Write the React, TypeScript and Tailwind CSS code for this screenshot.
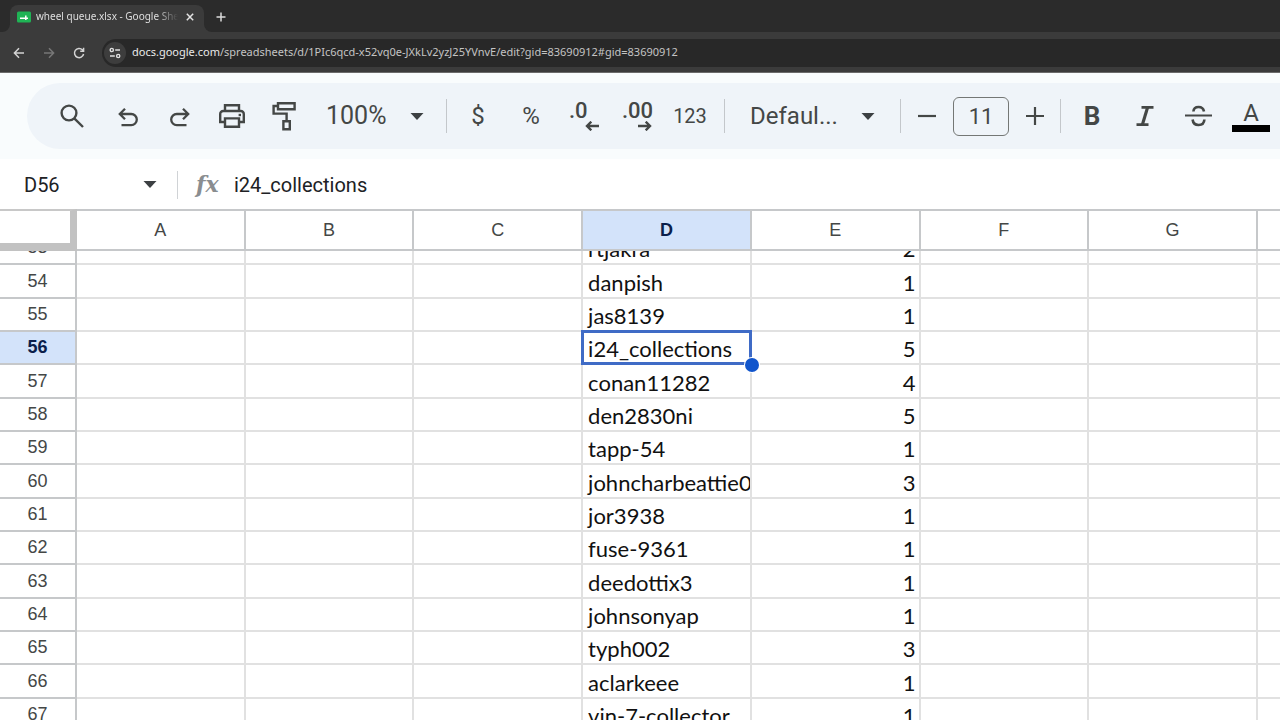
import type { ReactNode } from "react"

const columns = ["A", "B", "C", "D", "E", "F", "G", ""]

const rows = [
  { id: 53, name: "rtjakra", count: 2 },
  { id: 54, name: "danpish", count: 1 },
  { id: 55, name: "jas8139", count: 1 },
  { id: 56, name: "i24_collections", count: 5 },
  { id: 57, name: "conan11282", count: 4 },
  { id: 58, name: "den2830ni", count: 5 },
  { id: 59, name: "tapp-54", count: 1 },
  { id: 60, name: "johncharbeattie0", count: 3 },
  { id: 61, name: "jor3938", count: 1 },
  { id: 62, name: "fuse-9361", count: 1 },
  { id: 63, name: "deedottix3", count: 1 },
  { id: 64, name: "johnsonyap", count: 1 },
  { id: 65, name: "typh002", count: 3 },
  { id: 66, name: "aclarkeee", count: 1 },
  { id: 67, name: "vin-7-collector", count: 1 },
]

const activeRow = 56
const activeColumn = "D"

function ToolButton({ label, children }: { label: string; children: ReactNode }) {
  return (
    <button type="button" aria-label={label} className="flex h-12 w-[52px] shrink-0 items-center justify-center">
      {children}
    </button>
  )
}

function Divider() {
  return <div className="h-[34px] w-px shrink-0 bg-[#c3c7cb]" />
}

function Caret() {
  return (
    <svg viewBox="0 0 14 7" className="pointer-events-none h-[7px] w-[14px] shrink-0 fill-[#3c4043]">
      <path d="M0.500 0h13L7 7z" />
    </svg>
  )
}

function BrowserChrome() {
  return (
    <header className="shrink-0 border-b border-[#6b6b6b] bg-[#3b3b3b] font-['Noto_Sans',sans-serif] text-[#dedede]">
      <div className="flex h-8 items-end bg-[#2b2b2b] pl-[2px]">
        <svg viewBox="0 0 8 8" className="h-2 w-2 fill-[#3b3b3b]">
          <path d="M8 0v8H0a8 8 0 0 0 8-8z" />
        </svg>
        <div className="flex h-[27px] w-[194px] items-center rounded-t-lg bg-[#3b3b3b] pr-[6px] pb-1 pl-[7px]">
          <svg viewBox="0 0 14 12" className="mr-[5px] h-3 w-[14px] shrink-0">
            <rect width="14" height="11" y="0.5" rx="1.5" fill="#1fb455" />
            <path d="M3 7.2h8M8.800 4.500v4.500" stroke="#fff" strokeWidth="1.5" fill="none" />
          </svg>
          <span className="min-w-0 flex-1 overflow-hidden text-[10px] whitespace-nowrap [mask-image:linear-gradient(to_right,#000_85%,transparent)]">
            wheel queue.xlsx - Google Shee
          </span>
          <button type="button" aria-label="Close tab" className="ml-1 p-1">
            <svg viewBox="0 0 8 8" className="h-2 w-2 stroke-[#e3e3e3]" strokeWidth="1.5">
              <path d="M0.8 0.8l6.4 6.4M7.2 0.8L0.8 7.2" />
            </svg>
          </button>
        </div>
        <svg viewBox="0 0 8 8" className="h-2 w-2 fill-[#3b3b3b]">
          <path d="M0 0v8h8a8 8 0 0 1-8-8z" />
        </svg>
        <button type="button" aria-label="New tab" className="mb-[6px] p-1">
          <svg viewBox="0 0 10 10" className="h-[10px] w-[10px] stroke-[#dcdcdc]" strokeWidth="1.5">
            <path d="M5 0.5v9M0.5 5h9" />
          </svg>
        </button>
      </div>
      <div className="flex h-10 items-center pt-px pl-3">
        <button type="button" aria-label="Back" className="mr-4 flex h-[14px] w-[14px] items-center justify-center">
          <svg viewBox="0 0 12 12" className="h-3 w-3 stroke-[#d4d4d4]" strokeWidth="1.5" fill="none">
            <path d="M11 6H1.8M6 1.2L1.4 6 6 10.8" />
          </svg>
        </button>
        <button type="button" aria-label="Forward" className="mr-4 flex h-[14px] w-[14px] items-center justify-center">
          <svg viewBox="0 0 12 12" className="h-3 w-3 stroke-[#777]" strokeWidth="1.5" fill="none">
            <path d="M1 6h9.2M6 1.2L10.6 6 6 10.8" />
          </svg>
        </button>
        <button type="button" aria-label="Reload" className="mr-4 flex h-[14px] w-[14px] items-center justify-center">
          <svg viewBox="0 0 12 12" className="h-3 w-3 stroke-[#d4d4d4]" strokeWidth="1.5" fill="none">
            <path d="M10.6 7A4.6 4.6 0 1 1 9.4 2.8L10.6 4M10.6 0.8V4.2H7.2" />
          </svg>
        </button>
        <div className="flex h-7 flex-1 items-center rounded-l-full bg-[#282828] pl-[2px]">
          <span className="flex h-[22px] w-[22px] items-center justify-center rounded-full bg-[#3d3d3d]">
            <svg viewBox="0 0 12 12" className="h-3 w-3 stroke-[#e0e0e0]" strokeWidth="1.4" fill="none">
              <circle cx="2.8" cy="3" r="1.6" />
              <path d="M6.2 3H11M1 9h4.8" />
              <circle cx="9.2" cy="9" r="1.6" />
            </svg>
          </span>
          <a href="#sheet" className="ml-[6px] text-[11px] whitespace-nowrap text-[#c4c4c4]">
            <span className="text-[#eaeaea]">docs.google.com</span>
            /spreadsheets/d/1PIc6qcd-x52vq0e-JXkLv2yzJ25YVnvE/edit?gid=83690912#gid=83690912
          </a>
        </div>
      </div>
    </header>
  )
}

function Toolbar() {
  return (
    <div className="shrink-0 overflow-hidden bg-[#f9fcfd] pt-[10px] pb-[10px] pl-[27px] text-[#444746]">
      <div className="flex h-[66px] items-center rounded-l-full bg-[#eff4f9] pl-[19px]">
        <ToolButton label="Search">
          <svg viewBox="0 0 24 24" className="h-6 w-6 stroke-current" strokeWidth="2.4" fill="none">
            <circle cx="9" cy="9" r="7.4" />
            <path d="M14.3 14.3L23 23" />
          </svg>
        </ToolButton>
        <div className="ml-1 flex">
          <ToolButton label="Undo">
            <svg viewBox="0 0 20 22" className="h-[22px] w-5 stroke-current" strokeWidth="2.3" fill="none">
              <path d="M7 3.8L1.8 9 7 14.2M2 9h11.2a5.6 5.6 0 0 1 0 11.2H3.5" />
            </svg>
          </ToolButton>
          <ToolButton label="Redo">
            <svg viewBox="0 0 20 22" className="h-[22px] w-5 stroke-current" strokeWidth="2.3" fill="none">
              <path d="M13 3.8L18.2 9 13 14.2M18 9H6.8a5.6 5.6 0 0 0 0 11.2h9.7" />
            </svg>
          </ToolButton>
          <ToolButton label="Print">
            <svg viewBox="0 0 28 26" className="h-[26px] w-7 stroke-current" strokeWidth="2.4" fill="none">
              <path d="M7 7.8V2.2h14v5.6M7 19H2.2v-8a3 3 0 0 1 3-3h17.6a3 3 0 0 1 3 3v8H21" />
              <path d="M7 15.4h14v8.4H7z" />
              <path d="M20.6 12h2.4" />
            </svg>
          </ToolButton>
          <ToolButton label="Paint format">
            <svg viewBox="0 0 24 30" className="h-[30px] w-6 stroke-current" strokeWidth="2.4" fill="none">
              <path d="M6 2.2h16.6v6H6zM6 5H1.6v7.6h13V20M11.4 20.2h6.4v8h-6.4z" />
            </svg>
          </ToolButton>
        </div>
        <label className="ml-4 mr-[22px] flex w-[98px] shrink-0 items-center">
          <select
            aria-label="Zoom"
            className="w-[84px] appearance-none bg-transparent font-['Roboto',sans-serif] text-[25px]"
          >
            <option>100%</option>
          </select>
          <Caret />
        </label>
        <Divider />
        <div className="ml-[5px] flex gap-px font-['Roboto',sans-serif]">
          <ToolButton label="Format as currency">
            <span className="text-2xl">$</span>
          </ToolButton>
          <ToolButton label="Format as percent">
            <span className="text-2xl">%</span>
          </ToolButton>
          <ToolButton label="Decrease decimal places">
            <span className="flex w-[30px] flex-col text-left text-[22px] leading-[20px] font-medium">
              <span>.0</span>
              <svg viewBox="0 0 14 10" className="h-[10px] w-[14px] self-end stroke-current" strokeWidth="2.4" fill="none">
                <path d="M14 5H2M6.300 0.700L2 5l4.300 4.300" />
              </svg>
            </span>
          </ToolButton>
          <ToolButton label="Increase decimal places">
            <span className="flex w-[30px] flex-col text-left text-[22px] leading-[20px] font-medium">
              <span>.00</span>
              <svg viewBox="0 0 14 10" className="h-[10px] w-[14px] self-end stroke-current" strokeWidth="2.4" fill="none">
                <path d="M0 5h12M7.700 0.700L12 5l-4.300 4.300" />
              </svg>
            </span>
          </ToolButton>
          <ToolButton label="More formats">
            <span className="text-xl">123</span>
          </ToolButton>
        </div>
        <div className="ml-2">
          <Divider />
        </div>
        <label className="ml-[25px] mr-[25px] flex w-[125px] shrink-0 items-center">
          <select
            aria-label="Font"
            className="w-[111px] appearance-none bg-transparent font-['Roboto',sans-serif] text-2xl"
          >
            <option>Defaul...</option>
          </select>
          <Caret />
        </label>
        <Divider />
        <ToolButton label="Decrease font size">
          <svg viewBox="0 0 18 18" className="h-[18px] w-[18px] stroke-current" strokeWidth="2.2">
            <path d="M0 9h18" />
          </svg>
        </ToolButton>
        <input
          aria-label="Font size"
          defaultValue="11"
          className="h-[39px] w-14 shrink-0 rounded-md border border-[#747775] bg-transparent text-center font-['Roboto',sans-serif] text-[22px]"
        />
        <div className="flex w-[51px] justify-center">
          <ToolButton label="Increase font size">
            <svg viewBox="0 0 18 18" className="h-[18px] w-[18px] stroke-current" strokeWidth="2.2">
              <path d="M0 9h18M9 0v18" />
            </svg>
          </ToolButton>
        </div>
        <Divider />
        <div className="ml-[5px] flex gap-px">
          <ToolButton label="Bold">
            <span className="font-['Roboto',sans-serif] text-[26px] font-bold">B</span>
          </ToolButton>
          <ToolButton label="Italic">
            <svg viewBox="0 0 18 22" className="h-[22px] w-[18px] stroke-current" strokeWidth="2.800" fill="none">
              <path d="M5.500 2.400H17.500M0.500 19.600H12.500" />
              <path d="M11.600 2.400L6.400 19.600" strokeWidth="3.200" />
            </svg>
          </ToolButton>
          <ToolButton label="Strikethrough">
            <svg viewBox="0 0 27 22" className="h-[22px] w-[27px] stroke-current" strokeWidth="2.600" fill="none">
              <path d="M0 10.5h27" strokeWidth="2" />
              <path d="M19 6.5C18.400 3.400 16.500 2 13.600 2S8.600 3.600 8.400 6.500M7.600 14.500C8 18 10.300 20 13.600 20s5.600-2 5.800-5.500" />
            </svg>
          </ToolButton>
          <ToolButton label="Text color">
            <span className="flex w-[38px] flex-col items-center border-b-[7px] border-black font-['Roboto',sans-serif] text-2xl leading-[24px]">
              A
            </span>
          </ToolButton>
        </div>
      </div>
    </div>
  )
}

function FormulaBar() {
  return (
    <div className="flex h-[50px] shrink-0 items-center bg-white pt-px pl-6 font-['Roboto',sans-serif] text-xl text-[#202124]">
      <input aria-label="Name box" defaultValue="D56" className="w-[119px] bg-transparent" />
      <Caret />
      <div className="mr-[18px] ml-5 h-7 w-px bg-[#d0d3d6]" />
      <label htmlFor="formula" className="w-[38px] font-['DejaVu_Serif',serif] text-[22px] font-bold text-[#8a8d90] italic">
        fx
      </label>
      <input id="formula" defaultValue="i24_collections" className="min-w-0 flex-1 bg-transparent" />
    </div>
  )
}

function Sheet() {
  return (
    <div className="min-h-0 flex-1 overflow-hidden bg-white">
      <table className="w-full table-fixed border-separate border-spacing-0">
        <thead>
          <tr className="font-['Liberation_Sans',sans-serif] text-lg text-[#444746]">
            <th
              aria-label="Select all"
              className="h-[42px] w-[77px] border-t-2 border-r-[7px] border-b-[8px] border-t-[#c8c8c8] border-r-[#c2c2c2] border-b-[#c2c2c2]"
            />
            {columns.map((column, index) => (
              <th
                key={index}
                className={`h-[42px] border-y-2 border-r-2 border-[#c6c8ca] p-0 last:w-[22px] last:border-r-0 ${
                  column === activeColumn ? "bg-[#d3e3fa] font-bold text-[#0b1f4b]" : "font-normal"
                }`}
              >
                {column}
              </th>
            ))}
          </tr>
        </thead>
        <tbody className="[&>tr>*>div]:h-[31px] [&>tr:first-child>*>div]:h-3 [&>tr:nth-child(3n+2)>*>div]:h-8">
          {rows.map((row) => (
            <tr key={row.id} className="font-['Lato',sans-serif] text-[22px] text-[#111]">
              <th
                className={`border-r-2 border-b-2 border-[#c6c8ca] p-0 font-['Liberation_Sans',sans-serif] text-lg ${
                  row.id === activeRow ? "bg-[#d3e3fa] font-bold text-[#0b1f4b]" : "font-normal text-[#444746]"
                }`}
              >
                <div className="flex items-end justify-center overflow-hidden leading-[32px]">{row.id}</div>
              </th>
              {columns.map((column, index) => {
                const active = row.id === activeRow && column === activeColumn
                return (
                  <td key={index} className="relative border-r-2 border-b-2 border-[#e1e1e1] p-0 last:border-r-0">
                    <div
                      className={`flex items-end overflow-hidden leading-[28px] whitespace-nowrap ${
                        column === "E" ? "justify-end pr-[3px]" : "pl-[5px]"
                      }`}
                    >
                      {column === "D" && row.name}
                      {column === "E" && row.count}
                    </div>
                    {active && (
                      <>
                        <span className="absolute -inset-x-[2px] -top-[2px] -bottom-[2px] border-[3px] border-[#3f6bc6]" />
                        <span className="absolute -right-[9px] -bottom-[9px] z-10 h-[14px] w-[14px] rounded-full bg-[#1155cc] ring-1 ring-white" />
                      </>
                    )}
                  </td>
                )
              })}
            </tr>
          ))}
        </tbody>
      </table>
    </div>
  )
}

export default function App() {
  return (
    <div className="flex h-screen flex-col overflow-hidden bg-white">
      <BrowserChrome />
      <Toolbar />
      <FormulaBar />
      <Sheet />
    </div>
  )
}
